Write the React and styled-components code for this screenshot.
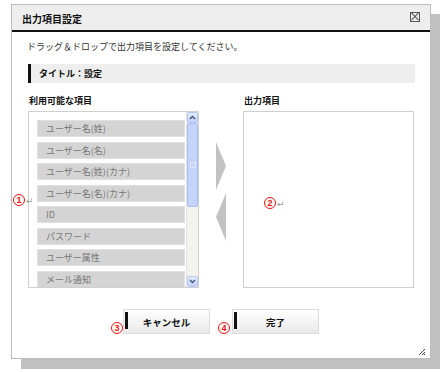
import React from 'react';
import styled, { createGlobalStyle } from 'styled-components';

const GlobalStyle = createGlobalStyle`
  html, body {
    margin: 0;
    padding: 0;
    background: #ffffff;
  }
  body {
    font-family: "Noto Sans CJK JP", "DejaVu Sans", sans-serif;
    font-size: 10px;
    color: #222;
  }
`;

const Page = styled.div`
  position: relative;
  width: 440px;
  height: 372px;
  padding: 4px 0 0 11px;
  box-sizing: border-box;
`;

const Dialog = styled.div`
  width: 420px;
  height: 355px;
  box-sizing: border-box;
  border: 1px solid #bdbdbd;
  background: #fff;
  box-shadow: 10px 10px 0 #c0c0c0;
  display: flex;
  flex-direction: column;
  position: relative;
`;

const Header = styled.div`
  height: 25px;
  background: #eeeeee;
  border-bottom: 2px solid #111;
  display: flex;
  align-items: center;
  justify-content: space-between;
  padding: 0 10px 0 10px;
`;

const Title = styled.span`
  font-weight: bold;
  font-size: 10px;
  color: #111;
  margin-top: 1px;
`;

const CloseBox = styled.span`
  width: 8px;
  height: 8px;
  border: 1px solid #555;
  position: relative;
  margin-top: -2px;

  &::before, &::after {
    content: '';
    position: absolute;
    left: -1px;
    top: 3.5px;
    width: 10px;
    height: 1px;
    background: #555;
    transform: rotate(45deg);
  }
  &::after {
    transform: rotate(-45deg);
  }
`;

const Body = styled.div`
  padding: 9px 15px 0 15px;
  display: flex;
  flex-direction: column;
`;

const Lead = styled.p`
  margin: 0;
  font-size: 9px;
  line-height: 12px;
  color: #333;
`;

const SectionBar = styled.div`
  margin-top: 11px;
  height: 19px;
  background: #eeeeee;
  border-left: 3px solid #111;
  margin-left: 1px;
  display: flex;
  align-items: center;
  padding-left: 8px;
  font-weight: bold;
  font-size: 9px;
  color: #111;
`;

const Columns = styled.div`
  display: grid;
  grid-template-columns: 171px 44px 171px;
  margin: 12px 0 0 1px;
`;

const Column = styled.div`
  display: flex;
  flex-direction: column;
`;

const Label = styled.div`
  font-weight: bold;
  font-size: 9px;
  line-height: 12px;
  padding-left: 1px;
  height: 16px;
  color: #111;
`;

const ListBox = styled.div`
  height: 177px;
  box-sizing: border-box;
  border: 1px solid #cfcfcf;
  display: flex;
  overflow: hidden;
`;

const Items = styled.div`
  flex: 1;
  padding: 8px 0 0 8px;
  display: flex;
  flex-direction: column;
  gap: 4.5px;
`;

const Item = styled.div`
  height: 17px;
  flex-shrink: 0;
  box-sizing: border-box;
  background: #d4d4d4;
  border: 1px solid #e0e0e0;
  width: 148px;
  padding-left: 8px;
  display: flex;
  align-items: center;
  font-size: 9px;
  color: #777;
`;

const Scrollbar = styled.div`
  width: 11px;
  background: #f4f4ee;
  border-left: 1px solid #e4e4e4;
  display: flex;
  flex-direction: column;
`;

const ScrollBtn = styled.div`
  height: 11px;
  box-sizing: border-box;
  background: linear-gradient(#e4ecfe, #c3d3fb);
  border: 1px solid #b5c7f3;
  border-radius: 2px;
  display: flex;
  align-items: center;
  justify-content: center;
  margin-top: ${p => (p.$bottom ? 'auto' : '0')};
`;

const Thumb = styled.div`
  height: 84px;
  box-sizing: border-box;
  background: #c4d4fb;
  border: 1px solid #a9bef2;
  border-radius: 2px;
  display: flex;
  align-items: center;
  justify-content: center;
`;

const Grip = styled.div`
  width: 4px;
  height: 4px;
  border: 1px solid #dde6fd;
`;

const Arrows = styled.div`
  display: flex;
  flex-direction: column;
  align-items: center;
  padding-top: 47px;
  gap: 3px;
`;

const OutBox = styled.div`
  height: 177px;
  box-sizing: border-box;
  border: 1px solid #cfcfcf;
`;

const Buttons = styled.div`
  display: flex;
  gap: 22px;
  margin: 21px 0 0 96px;
`;

const Button = styled.button`
  width: 87px;
  height: 25px;
  box-sizing: border-box;
  border: 1px solid #dcdcdc;
  background: linear-gradient(#ffffff, #e9e9e9);
  font-family: inherit;
  font-weight: bold;
  font-size: 9.5px;
  color: #111;
  position: relative;
  padding: 0;

  &::before {
    content: '';
    position: absolute;
    left: 1px;
    top: 2px;
    width: 3px;
    height: 17px;
    background: #111;
  }
`;

const ResizeGrip = styled.svg`
  position: absolute;
  right: 4px;
  bottom: 2px;
`;

const Note = styled.span`
  position: absolute;
  left: ${p => p.x}px;
  top: ${p => p.y}px;
  display: flex;
  align-items: center;
  white-space: nowrap;
`;

const Circled = styled.span`
  width: 10px;
  height: 10px;
  border: 1.5px solid #f01010;
  border-radius: 50%;
  color: #f01010;
  font-family: "Liberation Sans", sans-serif;
  font-weight: bold;
  font-size: 9px;
  line-height: 10px;
  text-align: center;
`;

const Ret = styled.span`
  color: #999;
  font-size: 9px;
  margin-left: 1px;
  margin-top: 2px;
`;

const fields = [
  'ユーザー名(姓)',
  'ユーザー名(名)',
  'ユーザー名(姓)(カナ)',
  'ユーザー名(名)(カナ)',
  'ID',
  'パスワード',
  'ユーザー属性',
  'メール通知',
];

const Caret = ({ down }) => (
  <svg width="7" height="5" viewBox="0 0 7 5">
    <path
      d={down ? 'M1 1 L3.5 3.5 L6 1' : 'M1 4 L3.5 1.5 L6 4'}
      fill="none"
      stroke="#3a4f7a"
      strokeWidth="1.3"
    />
  </svg>
);

const App = () => (
  <Page>
    <GlobalStyle />
    <Dialog>
      <Header>
        <Title>出力項目設定</Title>
        <CloseBox />
      </Header>
      <Body>
        <Lead>ドラッグ＆ドロップで出力項目を設定してください。</Lead>
        <SectionBar>タイトル：設定</SectionBar>
        <Columns>
          <Column>
            <Label>利用可能な項目</Label>
            <ListBox>
              <Items>
                {fields.map(f => (
                  <Item key={f}>{f}</Item>
                ))}
              </Items>
              <Scrollbar>
                <ScrollBtn>
                  <Caret />
                </ScrollBtn>
                <Thumb>
                  <Grip />
                </Thumb>
                <ScrollBtn $bottom>
                  <Caret down />
                </ScrollBtn>
              </Scrollbar>
            </ListBox>
          </Column>
          <Arrows>
            <svg width="11" height="48" viewBox="0 0 11 48">
              <polygon points="0,0 10,24 0,48" fill="#c2c2c2" />
            </svg>
            <svg width="11" height="48" viewBox="0 0 11 48">
              <polygon points="10,0 0,24 10,48" fill="#c2c2c2" />
            </svg>
          </Arrows>
          <Column>
            <Label>出力項目</Label>
            <OutBox />
          </Column>
        </Columns>
        <Buttons>
          <Button>キャンセル</Button>
          <Button>完了</Button>
        </Buttons>
      </Body>
      <ResizeGrip width="8" height="8" viewBox="0 0 8 8">
        <path d="M7 1 L1 7 M7 4 L4 7 M7 6 L6 7" stroke="#444" strokeWidth="1" />
      </ResizeGrip>
    </Dialog>
    <Note x={13} y={192}>
      <Circled>1</Circled>
      <Ret>↵</Ret>
    </Note>
    <Note x={264} y={195}>
      <Circled>2</Circled>
      <Ret>↵</Ret>
    </Note>
    <Note x={111} y={322}>
      <Circled>3</Circled>
    </Note>
    <Note x={218} y={322}>
      <Circled>4</Circled>
    </Note>
  </Page>
);

export default App;
